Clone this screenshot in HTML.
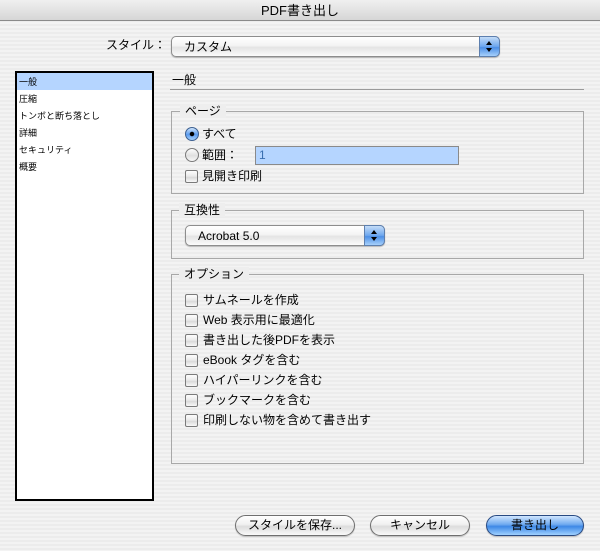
<!DOCTYPE html>
<html><head><meta charset="utf-8"><style>
*{box-sizing:border-box;margin:0;padding:0}
body{width:600px;height:551px;overflow:hidden;position:relative;font-family:"Liberation Sans","Noto Sans CJK JP",sans-serif;font-size:12px;color:#000;
background:repeating-linear-gradient(#ececec 0,#ececec 2px,#f3f3f3 2px,#f3f3f3 4px);}
.a{position:absolute}
.title{left:0;top:0;width:600px;height:21px;background:linear-gradient(#f0f0f0,#d6d6d6);border-bottom:1px solid #8a8a8a;text-align:center;font-size:13px;line-height:21px}
.pop{border:1px solid #8d8d8d;border-radius:5px;background:linear-gradient(#ffffff,#f4f4f4 45%,#e4e4e4 55%,#fbfbfb);box-shadow:0 1px 1px rgba(0,0,0,.25)}
.arr{position:absolute;right:-1px;top:-1px;bottom:-1px;width:21px;border-radius:0 5px 5px 0;border:1px solid #5d7fae;background:linear-gradient(#c4dcf8,#6da7ee 50%,#4b8ee6 55%,#a6d0fb)}
.arr:before{content:"";position:absolute;left:6px;top:4px;border:3px solid transparent;border-bottom:4px solid #000;border-top:0}
.arr:after{content:"";position:absolute;left:6px;bottom:4px;border:3px solid transparent;border-top:4px solid #000;border-bottom:0}
.list{left:15px;top:71px;width:139px;height:430px;background:#fff;border:2px solid #000;font-size:9px}
.list div{height:17px;line-height:18px;padding-left:2px}
.grp{border:1px solid #a8a8a8}
.lbl{font-size:12px;padding:0 5px;background:#eeeeee}
.cb{width:13px;height:13px;border:1px solid #7a7a7a;border-radius:2px;background:linear-gradient(#fdfdfd,#e8e8e8 50%,#d8d8d8 55%,#f8f8f8)}
.rb{width:14px;height:14px;border:1px solid #7a7a7a;border-radius:50%;background:linear-gradient(#fdfdfd,#e0e0e0 55%,#f8f8f8)}
.rbs{background:radial-gradient(circle,#000 0,#000 2px,transparent 2.5px),linear-gradient(#cfe4fb,#5b9cf0 55%,#a6d0fb);border-color:#3c5f90}
.btn{height:21px;border:1px solid #6f6f6f;border-radius:11px;background:linear-gradient(#ffffff,#f0f0f0 45%,#dcdcdc 55%,#fafafa);text-align:center;line-height:19px;font-size:12px;box-shadow:0 1px 1px rgba(0,0,0,.2)}
.blue{border-color:#294a82;background:linear-gradient(#d0e6ff,#6ea9ef 45%,#3d88e6 55%,#9fd0ff)}
.t{font-size:12px;line-height:14px;white-space:nowrap}
</style></head><body>
<div class="a title">PDF書き出し</div>
<div class="a t" style="left:106px;top:38px">スタイル：</div>
<div class="a pop" style="left:171px;top:36px;width:329px;height:21px"><span class="a t" style="left:12px;top:3px">カスタム</span><div class="arr"></div></div>
<div class="a list"><div style="background:#b5d5ff">一般</div><div>圧縮</div><div>トンボと断ち落とし</div><div>詳細</div><div>セキュリティ</div><div>概要</div></div>
<div class="a t" style="left:172px;top:73px">一般</div>
<div class="a" style="left:170px;top:89px;width:414px;height:1px;background:#9a9a9a"></div>

<div class="a grp" style="left:171px;top:111px;width:413px;height:83px"></div>
<div class="a lbl t" style="left:180px;top:104px">ページ</div>
<div class="a rb rbs" style="left:185px;top:127px"></div><div class="a t" style="left:202px;top:127px">すべて</div>
<div class="a rb" style="left:185px;top:148px"></div><div class="a t" style="left:202px;top:148px">範囲：</div>
<div class="a" style="left:255px;top:146px;width:204px;height:19px;background:#b5d5ff;border:1px solid #8a8a8a;font-size:12px;line-height:17px;padding-left:3px;color:#3a6fb0">1</div>
<div class="a cb" style="left:185px;top:170px"></div><div class="a t" style="left:202px;top:169px">見開き印刷</div>

<div class="a grp" style="left:171px;top:210px;width:413px;height:49px"></div>
<div class="a lbl t" style="left:179px;top:203px">互換性</div>
<div class="a pop" style="left:185px;top:225px;width:200px;height:21px"><span class="a t" style="left:12px;top:3px">Acrobat 5.0</span><div class="arr"></div></div>

<div class="a grp" style="left:171px;top:274px;width:413px;height:190px"></div>
<div class="a lbl t" style="left:179px;top:267px">オプション</div>
<div class="a cb" style="left:185px;top:294px"></div><div class="a t" style="left:203px;top:293px">サムネールを作成</div>
<div class="a cb" style="left:185px;top:314px"></div><div class="a t" style="left:203px;top:313px">Web 表示用に最適化</div>
<div class="a cb" style="left:185px;top:334px"></div><div class="a t" style="left:203px;top:333px">書き出した後PDFを表示</div>
<div class="a cb" style="left:185px;top:354px"></div><div class="a t" style="left:203px;top:353px">eBook タグを含む</div>
<div class="a cb" style="left:185px;top:374px"></div><div class="a t" style="left:203px;top:373px">ハイパーリンクを含む</div>
<div class="a cb" style="left:185px;top:394px"></div><div class="a t" style="left:203px;top:393px">ブックマークを含む</div>
<div class="a cb" style="left:185px;top:414px"></div><div class="a t" style="left:203px;top:413px">印刷しない物を含めて書き出す</div>

<div class="a btn" style="left:235px;top:515px;width:120px">スタイルを保存...</div>
<div class="a btn" style="left:370px;top:515px;width:100px">キャンセル</div>
<div class="a btn blue" style="left:486px;top:515px;width:98px">書き出し</div>
</body></html>
